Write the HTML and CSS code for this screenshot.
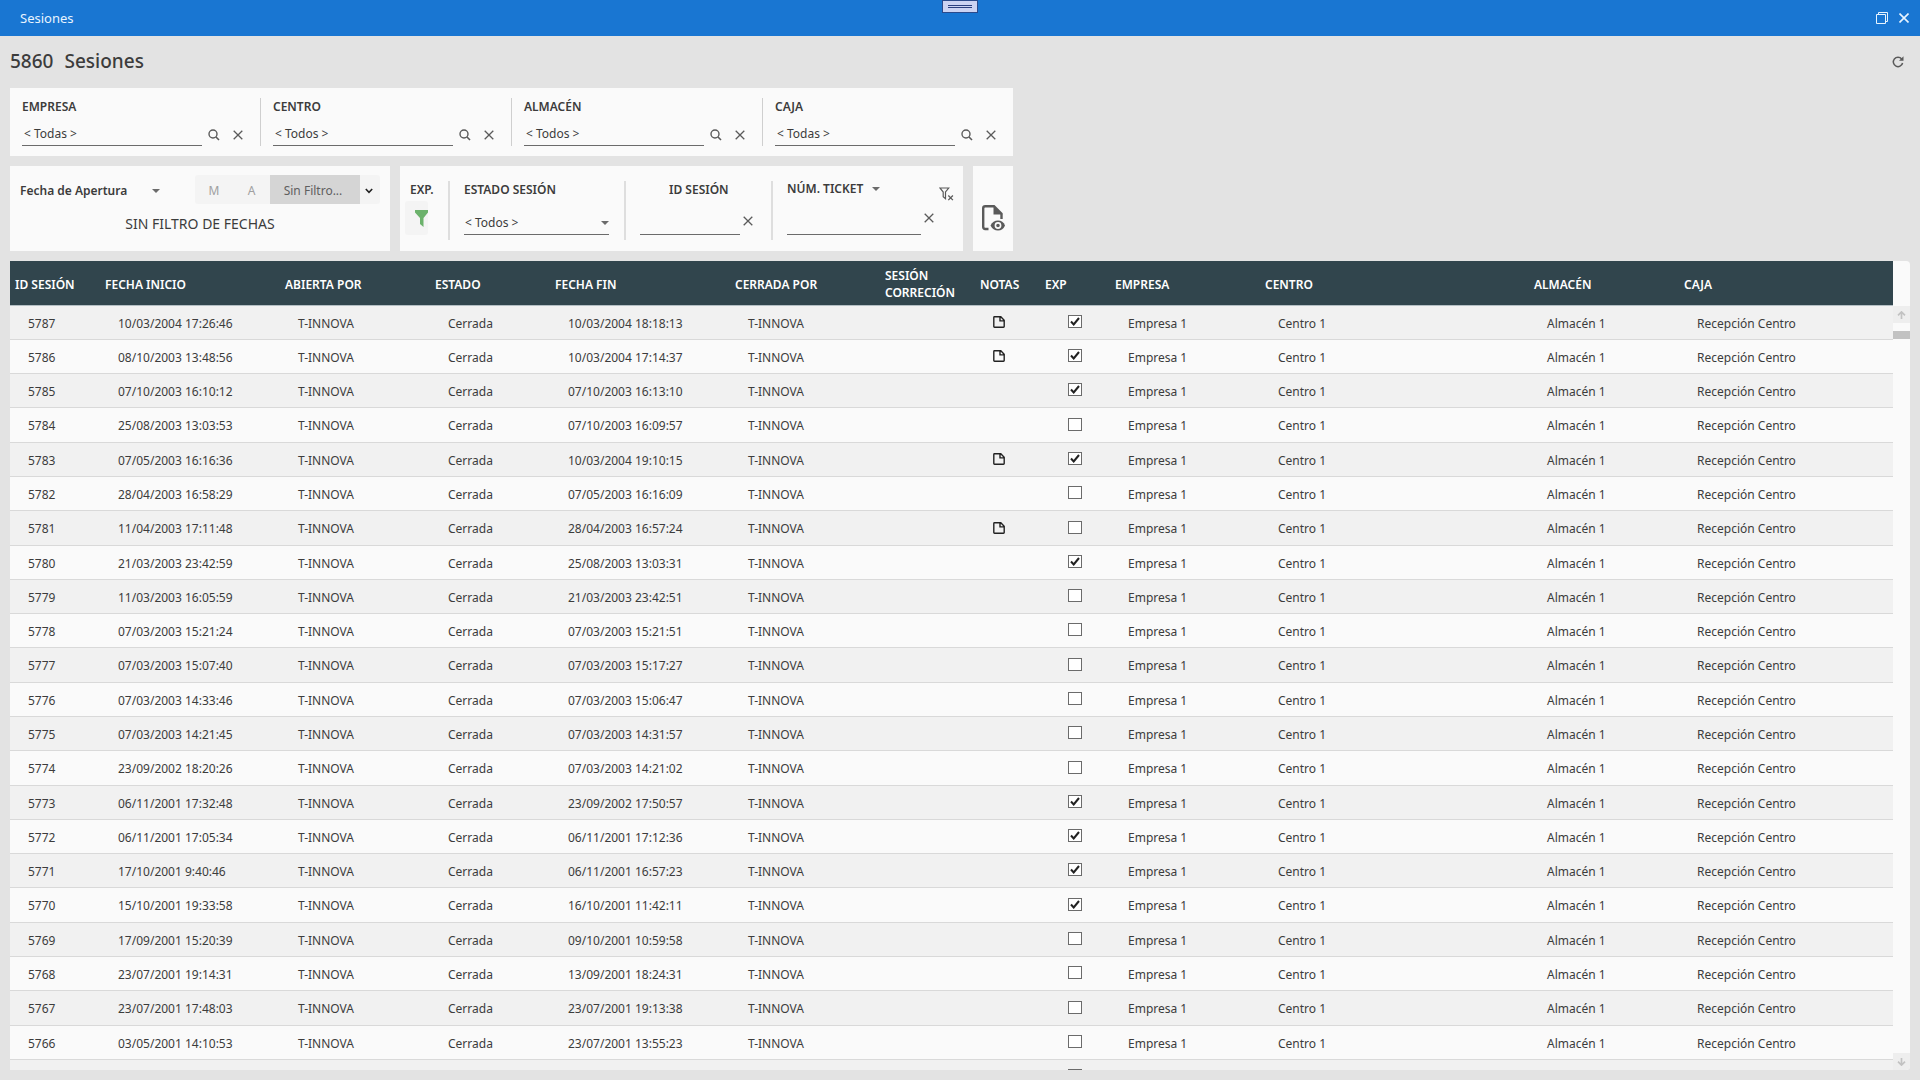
FILE: index.html
```html
<!DOCTYPE html>
<html lang="es">
<head>
<meta charset="utf-8">
<title>Sesiones</title>
<link rel="stylesheet" href="styles.css">
</head>
<body>
<svg class="sprite" aria-hidden="true">
  <symbol id="search" viewBox="0 0 12 12"><circle cx="5" cy="5" r="4" fill="none" stroke="currentColor" stroke-width="1.4"/><path d="M8 8l3 3" stroke="currentColor" stroke-width="1.6"/></symbol>
  <symbol id="close" viewBox="0 0 10 10"><path d="M.7.7l8.6 8.6M9.3.7L.7 9.3" stroke="currentColor" stroke-width="1.3"/></symbol>
  <symbol id="caret" viewBox="0 0 8 4"><path d="M0 0h8L4 4z" fill="currentColor"/></symbol>
  <symbol id="note" viewBox="0 0 12 12"><path d="M.8 1.5q0-.7.7-.7h6.3l3.4 3.4v6.3q0 .7-.7.7h-9q-.7 0-.7-.7zM7 .8v4.1h4.2" fill="none" stroke="currentColor" stroke-width="1.4"/></symbol>
  <symbol id="arrow-up" viewBox="0 0 9 8"><path d="M4.500 8V1M1 4.300L4.500.9 8 4.300" fill="none" stroke="currentColor" stroke-width="1.700"/></symbol>
</svg>

<header class="titlebar">
  <span>Sesiones</span>
  <div class="window-buttons">
    <button type="button" aria-label="Restaurar"><svg width="12" height="12" viewBox="0 0 12 12"><path d="M.5 2.500h9v9h-9zM2.500 2.500v-2h9v9h-2" fill="none" stroke="currentColor"/></svg></button>
    <button type="button" aria-label="Cerrar"><svg width="10" height="10" viewBox="0 0 10 10"><path d="M.5.5l9 9M9.500.5l-9 9" stroke="currentColor" stroke-width="1.600"/></svg></button>
  </div>
  <button type="button" class="handle" aria-label="Desplegar barra"></button>
</header>

<main class="page">
  <div class="heading">
    <h1><span>5860</span><span>Sesiones</span></h1>
    <button type="button" class="icon-button" aria-label="Actualizar"><svg width="12" height="12" viewBox="0 0 12 12"><path d="M9.700 3A4.700 4.700 0 1 0 10.600 7" fill="none" stroke="currentColor" stroke-width="1.500"/><path d="M11.500.3v4.500H7z" fill="currentColor"/></svg></button>
  </div>

  <form class="filters">
    <section class="panel lookups">
      <div class="lookup">
        <label for="empresa">EMPRESA</label>
        <div class="lookup-row">
          <input id="empresa" class="line-input" value="&lt; Todas &gt;">
          <button type="button" class="icon-button" aria-label="Buscar empresa"><svg width="12" height="12"><use href="#search"/></svg></button>
          <button type="button" class="icon-button" aria-label="Quitar empresa"><svg width="10" height="10"><use href="#close"/></svg></button>
        </div>
      </div>
      <div class="lookup">
        <label for="centro">CENTRO</label>
        <div class="lookup-row">
          <input id="centro" class="line-input" value="&lt; Todos &gt;">
          <button type="button" class="icon-button" aria-label="Buscar centro"><svg width="12" height="12"><use href="#search"/></svg></button>
          <button type="button" class="icon-button" aria-label="Quitar centro"><svg width="10" height="10"><use href="#close"/></svg></button>
        </div>
      </div>
      <div class="lookup">
        <label for="almacen">ALMACÉN</label>
        <div class="lookup-row">
          <input id="almacen" class="line-input" value="&lt; Todos &gt;">
          <button type="button" class="icon-button" aria-label="Buscar almacén"><svg width="12" height="12"><use href="#search"/></svg></button>
          <button type="button" class="icon-button" aria-label="Quitar almacén"><svg width="10" height="10"><use href="#close"/></svg></button>
        </div>
      </div>
      <div class="lookup">
        <label for="caja">CAJA</label>
        <div class="lookup-row">
          <input id="caja" class="line-input" value="&lt; Todas &gt;">
          <button type="button" class="icon-button" aria-label="Buscar caja"><svg width="12" height="12"><use href="#search"/></svg></button>
          <button type="button" class="icon-button" aria-label="Quitar caja"><svg width="10" height="10"><use href="#close"/></svg></button>
        </div>
      </div>
    </section>

    <div class="filter-row">
      <section class="panel dates">
        <div class="dates-top">
          <div class="select date-kind">
            <select aria-label="Tipo de fecha"><option>Fecha de Apertura</option></select>
            <svg width="8" height="4"><use href="#caret"/></svg>
          </div>
          <div class="segmented">
            <button type="button" class="period">M</button>
            <button type="button" class="period">A</button>
            <button type="button" class="chosen">Sin Filtro...</button>
            <button type="button" class="more" aria-label="Más periodos"><svg width="8" height="6" viewBox="0 0 8 6"><path d="M.8 1L4 4.300 7.200 1" fill="none" stroke="currentColor" stroke-width="1.600"/></svg></button>
          </div>
        </div>
        <p class="dates-summary">SIN FILTRO DE FECHAS</p>
      </section>

      <section class="panel criteria">
        <div class="criterion exported">
          <span class="label" id="exp-label">EXP.</span>
          <button type="button" class="export-filter" aria-labelledby="exp-label"><svg width="13" height="17" viewBox="0 0 13 17"><path d="M0 0h13v2.500L8.500 8v9L5 14V8L0 2.500z" fill="currentColor"/></svg></button>
        </div>
        <div class="criterion state">
          <label for="estado">ESTADO SESIÓN</label>
          <div class="select line-select">
            <select id="estado"><option>&lt; Todos &gt;</option></select>
            <svg width="8" height="4"><use href="#caret"/></svg>
          </div>
        </div>
        <div class="criterion session-id">
          <label for="id-sesion">ID SESIÓN</label>
          <div class="criterion-row">
            <input id="id-sesion" class="line-input">
            <button type="button" class="icon-button" aria-label="Quitar ID"><svg width="10" height="10"><use href="#close"/></svg></button>
          </div>
        </div>
        <div class="criterion ticket">
          <div class="select ticket-kind">
            <select aria-label="Buscar por"><option>NÚM. TICKET</option></select>
            <svg width="8" height="4"><use href="#caret"/></svg>
          </div>
          <div class="criterion-row">
            <input class="line-input" aria-label="Número de ticket">
            <button type="button" class="icon-button" aria-label="Quitar ticket"><svg width="10" height="10"><use href="#close"/></svg></button>
          </div>
        </div>
        <button type="button" class="icon-button clear-all" aria-label="Quitar todos los filtros"><svg width="15" height="14" viewBox="0 0 15 14"><path d="M.9 1h8.800L6.500 5v6.700L4.200 9.800V5z" fill="none" stroke="currentColor" stroke-width="1.200"/><path d="M9.300 8.500l4.600 4.600M13.900 8.500l-4.600 4.600" stroke="currentColor" stroke-width="1.300"/></svg></button>
      </section>

      <button type="button" class="panel preview" aria-label="Vista previa"><svg width="24" height="28" viewBox="0 0 24 28"><path d="M7.500 25H4.200Q2.200 25 2.200 23V4.200Q2.200 2.200 4.200 2.200H13L20.500 9.700V15" fill="none" stroke="currentColor" stroke-width="2.400"/><path d="M12.500 1.500v9h9z" fill="currentColor"/><path d="M9.500 21.500Q12 16.500 17 16.500t7 5q-2 5-7 5t-7.500-5z" fill="currentColor"/><circle cx="17" cy="21.500" r="2.600" fill="currentColor" stroke="#fafafa" stroke-width="1.600"/></svg></button>
    </div>
  </form>

  <section class="grid">
    <div class="grid-view">
      <table>
        <colgroup>
          <col class="w90"><col class="w180"><col class="w150"><col class="w120"><col class="w180"><col class="w150"><col class="w95"><col class="w65"><col class="w70"><col class="w150"><col class="w269"><col class="w150"><col>
        </colgroup>
        <thead>
          <tr><th>ID SESIÓN</th><th>FECHA INICIO</th><th>ABIERTA POR</th><th>ESTADO</th><th>FECHA FIN</th><th>CERRADA POR</th><th>SESIÓN CORRECIÓN</th><th>NOTAS</th><th>EXP</th><th>EMPRESA</th><th>CENTRO</th><th>ALMACÉN</th><th>CAJA</th></tr>
        </thead>
        <tbody id="sessions"></tbody>
      </table>
    </div>
    <div class="scrollbar">
      <button type="button" class="scroll-arrow" aria-label="Subir"><svg width="9" height="8"><use href="#arrow-up"/></svg></button>
      <div class="scroll-thumb"></div>
      <button type="button" class="scroll-arrow down" aria-label="Bajar"><svg width="9" height="8"><use href="#arrow-up"/></svg></button>
    </div>
  </section>
</main>
<script src="sessions.js"></script>
</body>
</html>
```
FILE: styles.css
```css
* { box-sizing: border-box; }

body {
  margin: 0;
  height: 100vh;
  display: flex;
  flex-direction: column;
  overflow: hidden;
  background: #e3e3e3;
  color: #3c3c3c;
  font: 12px/16px "Noto Sans", "Open Sans", sans-serif;
}

button, input, select {
  margin: 0;
  padding: 0;
  border: 0;
  border-radius: 0;
  background: none;
  color: inherit;
  font: inherit;
}

svg { display: block; flex: none; }
.sprite { position: absolute; width: 0; height: 0; }

/* Window title bar */
.titlebar {
  position: relative;
  flex: none;
  display: flex;
  align-items: center;
  justify-content: space-between;
  height: 36px;
  padding: 0 11px 0 20px;
  background: #1976d2;
  color: #e8f4ff;
  font-size: 13px;
}
.window-buttons { display: flex; align-items: center; gap: 11px; }
.handle {
  position: absolute;
  top: 0;
  left: calc(50% - 18px);
  width: 36px;
  height: 13px;
  border: 1px solid #2b4a8c;
  background:
    linear-gradient(#2b3f80, #2b3f80) center 4px / 24px 1px no-repeat,
    linear-gradient(#2b3f80, #2b3f80) center 6px / 24px 1px no-repeat,
    #ccd3f3;
}

.page {
  flex: 1;
  min-height: 0;
  display: flex;
  flex-direction: column;
  padding: 0 10px 10px;
}

.heading {
  flex: none;
  display: flex;
  align-items: center;
  justify-content: space-between;
  height: 52px;
  padding-right: 6px;
}
h1 {
  display: flex;
  gap: 11px;
  margin: 0;
  padding-bottom: 2px;
  font-size: 19px;
  line-height: 28px;
  font-weight: 500;
}

.panel { background: #fafafa; }
.icon-button { display: flex; color: #5a5a5a; }
label, .label, .ticket-kind select { font-size: 12px; font-weight: 600; }

.line-input {
  min-width: 0;
  height: 24px;
  padding: 0 2px;
  border-bottom: 1px solid #6b6b6b;
}

.select { display: grid; align-items: center; color: #6b6b6b; }
.select > * { grid-area: 1 / 1; }
.select select { width: 100%; appearance: none; color: #3c3c3c; }
.select svg { justify-self: end; pointer-events: none; }

/* Filters */
.filters {
  flex: none;
  display: flex;
  flex-direction: column;
  gap: 10px;
  width: 1003px;
}

.lookups { display: flex; height: 68px; padding: 10px 0; }
.lookup { width: 250px; padding-left: 12px; }
.lookup + .lookup { width: 251px; border-left: 1px solid #cfcfcf; }
.lookup label { display: block; height: 24px; line-height: 18px; }
.lookup-row { display: flex; align-items: center; }
.lookup-row .line-input { width: 180px; margin-right: 6px; }
.lookup-row .icon-button { padding-top: 2px; }
.lookup-row .icon-button + .icon-button { margin-left: 13px; }

.filter-row { display: flex; gap: 10px; height: 85px; }

.dates { width: 380px; padding: 9px 10px; }
.dates-top { display: flex; justify-content: space-between; }
.date-kind { width: 140px; padding-top: 2px; }
.date-kind select { font-weight: 600; }
.segmented {
  display: flex;
  height: 29px;
  border-radius: 3px;
  background: #f4f4f4;
}
.segmented button { display: flex; align-items: center; justify-content: center; padding-top: 2px; }
.segmented .period { width: 37px; color: #a0a0a0; }
.segmented .period:first-child { width: 38px; }
.segmented .chosen { width: 90px; padding-right: 4px; background: #d5d5d5; color: #5f5f5f; }
.segmented .more { width: 20px; padding-right: 2px; color: #222; }
.dates-summary {
  margin: 10px 0 0;
  text-align: center;
  font-size: 14px;
  line-height: 20px;
}

.criteria { display: flex; width: 563px; padding: 15px 9px 11px 0; }
.criterion {
  display: flex;
  flex-direction: column;
  justify-content: space-between;
  padding-bottom: 5px;
}
.criterion label, .criterion .label { line-height: 18px; }
.criterion + .criterion { border-left: 2px solid #dedede; }
.criterion-row { display: flex; align-items: center; gap: 3px; }
.exported { width: 48px; padding-left: 5px; }
.exported .label { padding-left: 5px; }
.export-filter {
  display: flex;
  justify-content: flex-end;
  align-items: center;
  width: 23px;
  height: 34px;
  border-radius: 3px;
  background: #f4f4f4;
  color: #6cb26c;
}
.state { width: 176px; padding-left: 14px; padding-right: 15px; }
.line-select { height: 24px; border-bottom: 1px solid #6b6b6b; }
.line-select select { padding-left: 1px; }
.session-id { width: 147px; padding-left: 14px; }
.session-id label { padding-left: 29px; }
.session-id .line-input { width: 100px; }
.session-id .icon-button { padding-bottom: 5px; }
.ticket { width: 167px; padding-left: 14px; }
.ticket-kind { width: 93px; }
.ticket .line-input { width: 134px; }
.ticket .icon-button { padding-bottom: 10px; }
.clear-all { align-self: flex-start; margin: 6px 0 0 1px; }

.preview {
  display: flex;
  align-items: center;
  justify-content: center;
  width: 40px;
  padding-top: 18px;
  color: #5a5a5a;
}

/* Session grid */
.grid {
  flex: 1;
  min-height: 0;
  display: flex;
  margin-top: 10px;
  border-radius: 0 4px 4px 0;
  overflow: hidden;
  background: #fafafa;
}
.grid-view { flex: 1; min-width: 0; overflow: hidden; }

table { width: 100%; table-layout: fixed; border-collapse: separate; border-spacing: 0; }
.w65 { width: 65px; }
.w70 { width: 70px; }
.w90 { width: 90px; }
.w95 { width: 95px; }
.w120 { width: 120px; }
.w150 { width: 150px; }
.w180 { width: 180px; }
.w269 { width: 269px; }

th {
  height: 45px;
  padding: 2px 5px 0;
  border-bottom: 1px solid #b4bfc4;
  background: #31454d;
  color: #fff;
  text-align: left;
  font-size: 12px;
  line-height: 17px;
  font-weight: 600;
}
td {
  height: 34px;
  padding: 2px 0 0 18px;
  border-bottom: 1px solid #d9d9d9;
  white-space: nowrap;
}
tbody tr:nth-child(odd) { background: #f1f1f1; }
tbody tr:nth-child(7n + 4) td, tbody tr:nth-child(7n) td { height: 35px; }
td.note { padding-top: 0; padding-bottom: 1px; color: #222; }
td.exp { padding: 0 0 2px 28px; }
.note svg, .exp input { display: block; }

.exp input {
  appearance: none;
  width: 14px;
  height: 13px;
  border: 1px solid #6b6b6b;
  background: #fff;
}
.exp label { display: grid; width: 14px; }
.exp label > * { grid-area: 1 / 1; }
.exp svg { place-self: center; pointer-events: none; color: #222; }

/* Scroll bar */
.scrollbar { display: flex; flex-direction: column; width: 17px; padding-top: 45px; }
.scroll-arrow {
  display: flex;
  align-items: center;
  justify-content: center;
  height: 17px;
  background: #eee;
  color: #c2c2c2;
}
.scroll-thumb { height: 8px; margin-top: 8px; background: #c2c2c2; }
.scroll-arrow.down { margin-top: auto; }
.scroll-arrow.down svg { transform: rotate(180deg); }
```
FILE: sessions.js
```js
// id, start, end, has note, exported
const sessions = [
  [5787, "10/03/2004 17:26:46", "10/03/2004 18:18:13", 1, 1],
  [5786, "08/10/2003 13:48:56", "10/03/2004 17:14:37", 1, 1],
  [5785, "07/10/2003 16:10:12", "07/10/2003 16:13:10", 0, 1],
  [5784, "25/08/2003 13:03:53", "07/10/2003 16:09:57", 0, 0],
  [5783, "07/05/2003 16:16:36", "10/03/2004 19:10:15", 1, 1],
  [5782, "28/04/2003 16:58:29", "07/05/2003 16:16:09", 0, 0],
  [5781, "11/04/2003 17:11:48", "28/04/2003 16:57:24", 1, 0],
  [5780, "21/03/2003 23:42:59", "25/08/2003 13:03:31", 0, 1],
  [5779, "11/03/2003 16:05:59", "21/03/2003 23:42:51", 0, 0],
  [5778, "07/03/2003 15:21:24", "07/03/2003 15:21:51", 0, 0],
  [5777, "07/03/2003 15:07:40", "07/03/2003 15:17:27", 0, 0],
  [5776, "07/03/2003 14:33:46", "07/03/2003 15:06:47", 0, 0],
  [5775, "07/03/2003 14:21:45", "07/03/2003 14:31:57", 0, 0],
  [5774, "23/09/2002 18:20:26", "07/03/2003 14:21:02", 0, 0],
  [5773, "06/11/2001 17:32:48", "23/09/2002 17:50:57", 0, 1],
  [5772, "06/11/2001 17:05:34", "06/11/2001 17:12:36", 0, 1],
  [5771, "17/10/2001 9:40:46", "06/11/2001 16:57:23", 0, 1],
  [5770, "15/10/2001 19:33:58", "16/10/2001 11:42:11", 0, 1],
  [5769, "17/09/2001 15:20:39", "09/10/2001 10:59:58", 0, 0],
  [5768, "23/07/2001 19:14:31", "13/09/2001 18:24:31", 0, 0],
  [5767, "23/07/2001 17:48:03", "23/07/2001 19:13:38", 0, 0],
  [5766, "03/05/2001 14:10:53", "23/07/2001 13:55:23", 0, 0],
  ["", "", "", 0, 0],
];

const note = '<svg width="12" height="12"><use href="#note"/></svg>';
const tick = '<svg width="10" height="9" viewBox="0 0 10 9"><path d="M1 4.500L3.700 7.500 9 1" fill="none" stroke="currentColor" stroke-width="2"/></svg>';

document.getElementById("sessions").innerHTML = sessions.map(([id, start, end, hasNote, exported]) => {
  const text = (value) => `<td>${id ? value : ""}</td>`;
  return `<tr>${text(id)}${text(start)}${text("T-INNOVA")}${text("Cerrada")}${text(end)}${text("T-INNOVA")}<td></td>
    <td class="note">${hasNote ? note : ""}</td>
    <td class="exp"><label><input type="checkbox" aria-label="Exportada"${exported ? " checked" : ""}>${exported ? tick : ""}</label></td>
    ${text("Empresa 1")}${text("Centro 1")}${text("Almacén 1")}${text("Recepción Centro")}</tr>`;
}).join("");
```
